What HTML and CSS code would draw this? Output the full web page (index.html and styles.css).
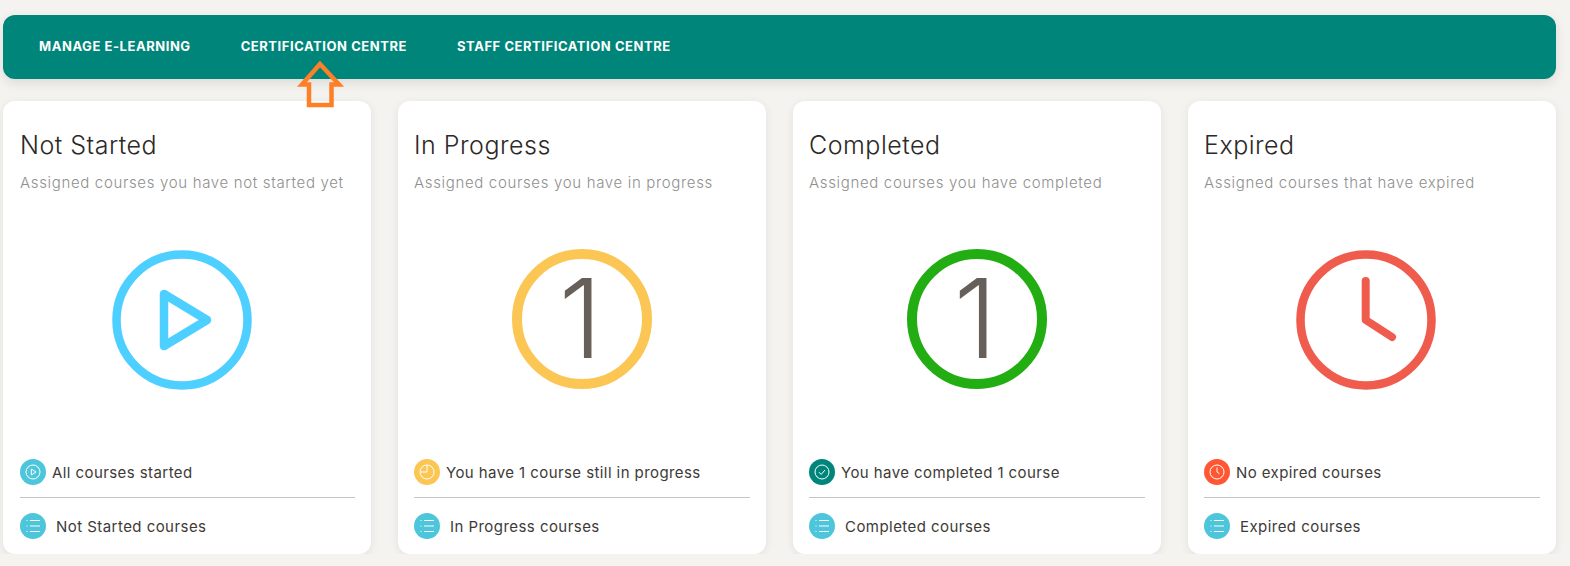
FILE: index.html
```html
<!DOCTYPE html>
<html lang="en">
<head>
    <meta charset="UTF-8">
    <meta name="viewport" content="width=device-width, initial-scale=1.0">
    <title>E-Learning</title>
    <link rel="stylesheet" href="styles.css">
</head>
<body>
    <nav class="topbar">
        <a href="#">MANAGE E-LEARNING</a>
        <a href="#">CERTIFICATION CENTRE</a>
        <a href="#">STAFF CERTIFICATION CENTRE</a>
        <svg class="arrow" width="54" height="50" viewBox="0 0 54 50" fill="none">
            <path d="M27 4 L9 24.5 H16 V45 H38.5 V24.5 H46 Z" stroke="#ff7f27" stroke-width="4.5"/>
        </svg>
    </nav>

    <div class="cards">
        <div class="card">
            <h3>Not Started</h3>
            <p class="sub">Assigned courses you have not started yet</p>
            <div class="big big-icon">
                <svg width="140" height="140" viewBox="0 0 140 140" fill="none">
                    <circle cx="70" cy="70" r="65.5" stroke="#4dcfff" stroke-width="8.5"/>
                    <path d="M52 44 L95 70 L52 96 Z" stroke="#4dcfff" stroke-width="8.5" stroke-linejoin="round"/>
                </svg>
            </div>
            <div class="status">
                <span class="dot dot-blue">
                    <svg width="16" height="16" viewBox="0 0 16 16" fill="none" stroke="#fff"><circle cx="8" cy="8" r="7"/><path d="M6.3 5 L11 8 L6.3 11 Z"/></svg>
                </span>
                All courses started
            </div>
            <div class="link">
                <span class="dot dot-blue">
                    <svg width="16" height="16" viewBox="0 0 16 16" fill="none" stroke="#fff"><path d="M5 2.5 H15 M5 8 H15 M5 13.5 H15 M1.5 2.5 H2.5 M1.5 8 H2.5 M1.5 13.5 H2.5"/></svg>
                </span>
                <span class="link-text">Not Started courses</span>
            </div>
        </div>

        <div class="card">
            <h3>In Progress</h3>
            <p class="sub">Assigned courses you have in progress</p>
            <div class="big">
                <div class="ring ring-yellow">1</div>
            </div>
            <div class="status">
                <span class="dot dot-yellow">
                    <svg width="16" height="16" viewBox="0 0 16 16" fill="none" stroke="#fff"><circle cx="8" cy="8" r="7"/><path d="M8 1.5 V8 H1.5"/></svg>
                </span>
                You have 1 course still in progress
            </div>
            <div class="link">
                <span class="dot dot-blue">
                    <svg width="16" height="16" viewBox="0 0 16 16" fill="none" stroke="#fff"><path d="M5 2.5 H15 M5 8 H15 M5 13.5 H15 M1.5 2.5 H2.5 M1.5 8 H2.5 M1.5 13.5 H2.5"/></svg>
                </span>
                <span class="link-text">In Progress courses</span>
            </div>
        </div>

        <div class="card">
            <h3>Completed</h3>
            <p class="sub">Assigned courses you have completed</p>
            <div class="big">
                <div class="ring ring-green">1</div>
            </div>
            <div class="status">
                <span class="dot dot-teal">
                    <svg width="16" height="16" viewBox="0 0 16 16" fill="none" stroke="#fff"><circle cx="8" cy="8" r="7"/><path d="M5 8.2 L7.2 10.4 L11 6"/></svg>
                </span>
                You have completed 1 course
            </div>
            <div class="link">
                <span class="dot dot-blue">
                    <svg width="16" height="16" viewBox="0 0 16 16" fill="none" stroke="#fff"><path d="M5 2.5 H15 M5 8 H15 M5 13.5 H15 M1.5 2.5 H2.5 M1.5 8 H2.5 M1.5 13.5 H2.5"/></svg>
                </span>
                <span class="link-text">Completed courses</span>
            </div>
        </div>

        <div class="card">
            <h3>Expired</h3>
            <p class="sub">Assigned courses that have expired</p>
            <div class="big big-icon">
                <svg width="140" height="140" viewBox="0 0 140 140" fill="none">
                    <circle cx="70" cy="70" r="65.5" stroke="#ef5b4c" stroke-width="8.5"/>
                    <path d="M69.7 31 V70 L96 87" stroke="#ef5b4c" stroke-width="8" stroke-linecap="round" stroke-linejoin="round"/>
                </svg>
            </div>
            <div class="status">
                <span class="dot dot-red">
                    <svg width="16" height="16" viewBox="0 0 16 16" fill="none" stroke="#fff"><circle cx="8" cy="8" r="7"/><path d="M8 3.5 V8 L10.5 9.7"/></svg>
                </span>
                No expired courses
            </div>
            <div class="link">
                <span class="dot dot-blue">
                    <svg width="16" height="16" viewBox="0 0 16 16" fill="none" stroke="#fff"><path d="M5 2.5 H15 M5 8 H15 M5 13.5 H15 M1.5 2.5 H2.5 M1.5 8 H2.5 M1.5 13.5 H2.5"/></svg>
                </span>
                <span class="link-text">Expired courses</span>
            </div>
        </div>
    </div>
</body>
</html>
```

FILE: styles.css
```css
body {
    margin: 0;
    padding: 15px 0 0 3px;
    background-color: #f4f3ef;
    font-family: Inter, sans-serif;
    color: #3d3a37;
    overflow: hidden;
}
.topbar {
    position: relative;
    display: flex;
    align-items: center;
    gap: 50px;
    height: 64px;
    margin-right: 14px;
    padding-left: 36px;
    padding-bottom: 2px;
    box-sizing: border-box;
    background-color: #00857a;
    border-radius: 12px;
    box-shadow: 0 4px 12px rgba(0, 0, 0, 0.1);
}
.topbar a {
    color: #fff;
    font-size: 13px;
    font-weight: 700;
    letter-spacing: 0.55px;
    text-decoration: none;
}
.arrow {
    position: absolute;
    left: 290px;
    top: 45px;
}
.cards {
    display: flex;
    gap: 27px;
    margin-top: 22px;
}
.card {
    display: flex;
    flex-direction: column;
    width: 368px;
    height: 453px;
    box-sizing: border-box;
    padding: 29px 16px 0 16px;
    background-color: #fff;
    border-radius: 12px;
    box-shadow: 0 2px 10px rgba(0, 0, 0, 0.08);
}
.card:first-child {
    padding-left: 17px;
}
h3 {
    margin: 0;
    font-size: 25px;
    line-height: 30px;
    font-weight: 300;
    letter-spacing: 0.5px;
    color: #2c2926;
}
.sub {
    margin: 13px 0 0;
    font-size: 15px;
    line-height: 20px;
    font-weight: 300;
    letter-spacing: 0.66px;
    color: #8f8f8f;
}
.big {
    display: flex;
    justify-content: center;
    margin-top: 56px;
    height: 140px;
}
.big-icon {
    justify-content: flex-start;
    padding-left: 92px;
    margin-top: 57px;
}
.ring {
    width: 140px;
    height: 140px;
    box-sizing: border-box;
    border: 10px solid;
    border-radius: 50%;
    padding-right: 3px;
    text-align: center;
    font-size: 110px;
    font-weight: 300;
    line-height: 118px;
    color: #665f5a;
}
.ring-yellow { border-color: #fcc655; }
.ring-green { border-color: #22ad12; }
.big-icon + .status { margin-top: 69px; }
.status {
    display: flex;
    align-items: center;
    gap: 6px;
    margin-top: 70px;
    padding-bottom: 12px;
    border-bottom: 1px solid #c4c4c4;
    font-size: 15px;
    letter-spacing: 0.42px;
}
.link {
    display: flex;
    align-items: center;
    gap: 10px;
    margin-top: 15px;
    font-size: 15px;
    letter-spacing: 0.45px;
}
.dot {
    display: flex;
    align-items: center;
    justify-content: center;
    flex: none;
    width: 26px;
    height: 26px;
    border-radius: 50%;
}
.dot-blue { background-color: #4dc5db; }
.dot-yellow { background-color: #fcc655; }
.dot-teal { background-color: #00857a; }
.dot-red { background-color: #ff5733; }
```
